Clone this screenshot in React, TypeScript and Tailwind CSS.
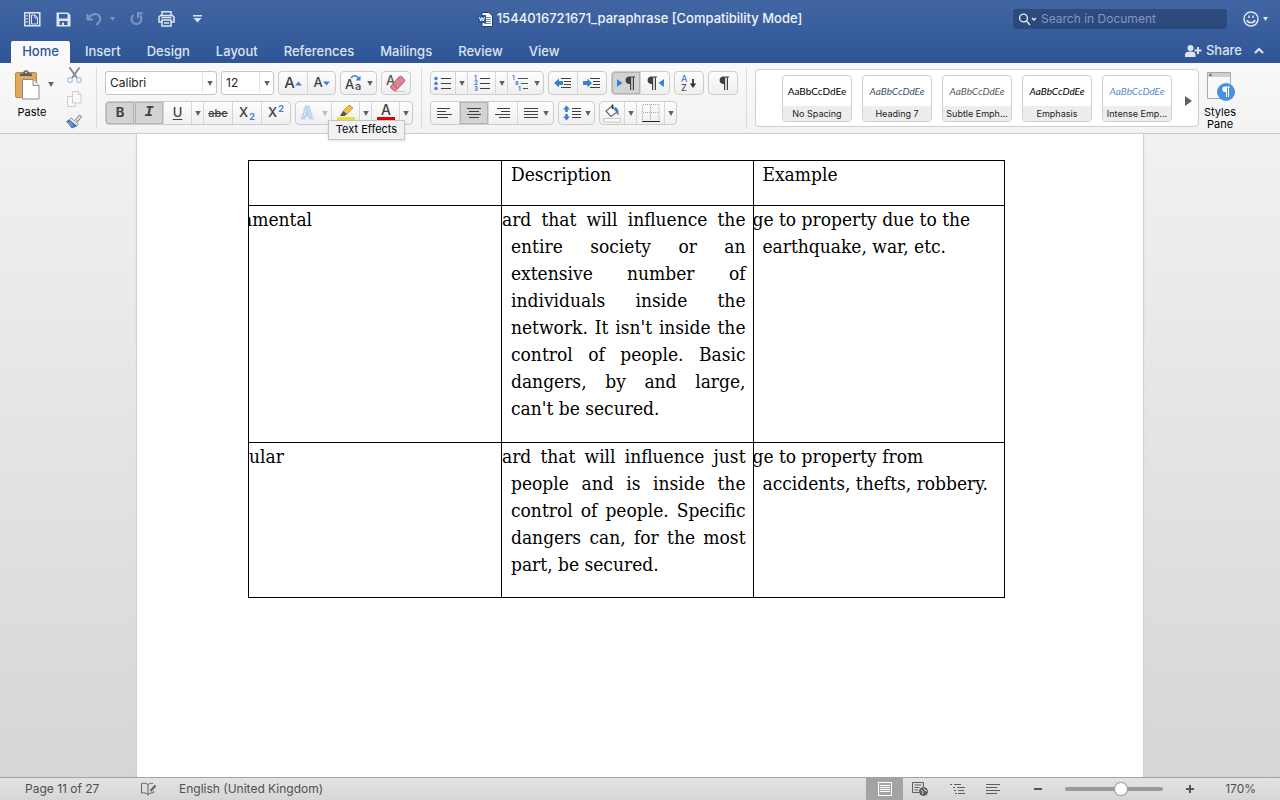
import React from 'react';

interface CellProps {
  label: string;
  className: string;
  pressed?: boolean;
  last?: boolean;
  children: React.ReactNode;
}

function Arrow({ faded }: { faded?: boolean }) {
  return (
    <svg width="6" height="5" viewBox="0 0 6 5" className={faded ? 'shrink-0 opacity-40' : 'shrink-0'}>
      <path d="M0.3 0h5.4L3 5z" fill="#5f5f5f" />
    </svg>
  );
}

function Group({ children }: { children: React.ReactNode }) {
  return (
    <div className="relative flex h-6 rounded-[4px] border border-[#cdcdcd] bg-gradient-to-b from-[#fdfdfd] to-[#efefef]">
      {children}
    </div>
  );
}

function Cell({ label, className, pressed, last, children }: CellProps) {
  return (
    <button
      type="button"
      aria-label={label}
      aria-pressed={pressed}
      className={`flex h-full items-center justify-center text-[#404040] ${last ? '' : 'border-r border-[#d6d6d6]'} ${
        pressed ? 'bg-[#d3d3d3] shadow-[inset_0_0_0_1px_#b3b3b3]' : ''
      } ${className}`}
    >
      {children}
    </button>
  );
}

function Divider() {
  return <div className="mx-2 my-1 w-px bg-[#dcdcdc]" />;
}

interface LinesProps {
  rows: [number, number][];
}

// text lines, each given as start x and end x
function Lines({ rows }: LinesProps) {
  return (
    <svg width="16" height="14" viewBox="0 0 16 14" stroke="#404040" strokeWidth="1" shapeRendering="crispEdges">
      {rows.map(([from, to], i) => (
        <path key={i} d={`M${from} ${i * 3 + 2.5}H${to}`} />
      ))}
    </svg>
  );
}

function IndentIcon({ outward }: { outward?: boolean }) {
  return (
    <svg width="18" height="14" viewBox="0 0 18 14">
      <path d="M7 2.5h10M10 5.5h7M10 8.5h7M7 11.5h10" stroke="#404040" shapeRendering="crispEdges" />
      {outward ? (
        <path d="M0 7 5 2.500v2.500h4v4H5v2.500z" fill="#3c80d4" />
      ) : (
        <path d="M9 7 4.500 2.500v2.500h-4.500v4h4.500v2.500z" fill="#3c80d4" />
      )}
    </svg>
  );
}

function Pilcrow() {
  return (
    <svg width="11" height="14" viewBox="0 0 11 14">
      <path d="M5.5 0.5H11V1.5H10V14H8.8V1.5H7.2V14H6V8H4.8A3.8 3.8 0 0 1 4.8 0.5z" fill="#404040" />
    </svg>
  );
}

function ListIcon({ kind }: { kind: 'bullets' | 'numbers' | 'levels' }) {
  return (
    <svg width="18" height="16" viewBox="0 0 18 16">
      {kind === 'levels' ? (
        <path d="M6 3.5h10M9 8.5h7M11 13.5h5" stroke="#555" shapeRendering="crispEdges" />
      ) : (
        <path d="M7 3.5h10M7 8.5h10M7 13.5h10" stroke="#404040" shapeRendering="crispEdges" />
      )}
      {kind === 'bullets' && (
        <g fill="#3c80d4">
          <circle cx="2" cy="3.5" r="1.7" />
          <circle cx="2" cy="8.5" r="1.7" />
          <circle cx="2" cy="13.5" r="1.7" />
        </g>
      )}
      {kind === 'numbers' && (
        <g fill="#3c80d4" fontFamily="Inter, sans-serif" fontSize="6" fontWeight="700">
          <text x="1" y="5">1</text>
          <text x="1" y="10">2</text>
          <text x="1" y="16">3</text>
        </g>
      )}
      {kind === 'levels' && (
        <g fill="#3c80d4" fontFamily="Inter, sans-serif" fontSize="6" fontWeight="700">
          <text x="0" y="5">1</text>
          <text x="3" y="10">a</text>
          <text x="6" y="16">1</text>
        </g>
      )}
    </svg>
  );
}

const tabs = ['Insert', 'Design', 'Layout', 'References', 'Mailings', 'Review', 'View'];

const styles = [
  { name: 'No Spacing', look: 'text-black' },
  { name: 'Heading 7', look: 'italic text-[#44546a]' },
  { name: 'Subtle Emph...', look: 'italic text-[#5c5c5c]' },
  { name: 'Emphasis', look: 'italic text-black' },
  { name: 'Intense Emp...', look: 'italic text-[#5b8bc9]' },
];

function TitleBar() {
  return (
    <div className="flex h-[38px] items-center px-3">
      <div className="flex flex-1 items-center text-[#dfe6f2]">
        <button type="button" aria-label="Sidebar" className="ml-3 mr-[15px]">
          <svg width="17" height="15" viewBox="0 0 17 15" fill="none" stroke="currentColor">
            <path d="M0.8 0.8h15v13h-15z" strokeWidth="1.5" />
            <path d="M5.5 1v13" strokeWidth="1.2" />
            <path d="M3 3v1.5M3 6v1.5M3 9v1.5" strokeWidth="1.4" />
            <path d="M7.5 3h3.5l2.5 2.5V12h-6zM11 3v3h2.5" />
          </svg>
        </button>
        <button type="button" aria-label="Save" className="mr-[15px]">
          <svg width="15" height="15" viewBox="0 0 15 15">
            <path d="M0.5 0.5h11.5l2.5 2.5v11.5h-14z" fill="currentColor" />
            <path d="M3 2h8.5v4.5H3zM3.5 9h8v4h-8z" fill="#3a5f9f" />
            <path d="M6 10.5h2V13H6z" fill="currentColor" />
          </svg>
        </button>
        <button type="button" aria-label="Undo" className="mr-2 opacity-40">
          <svg width="16" height="14" viewBox="0 0 16 14" fill="none" stroke="currentColor" strokeWidth="2">
            <path d="M1.5 2v5.5H7" />
            <path d="M2 7C5 2 10 0.500 13 3.500c2.500 3 1 7-3 9.500" />
          </svg>
        </button>
        <button type="button" aria-label="Undo history" className="mr-[15px] opacity-40">
          <svg width="5" height="4" viewBox="0 0 5 4"><path d="M0 0h5L2.500 4z" fill="currentColor" /></svg>
        </button>
        <button type="button" aria-label="Redo" className="mr-[15px] opacity-40">
          <svg width="13" height="14" viewBox="0 0 13 14" fill="none" stroke="currentColor" strokeWidth="2">
            <path d="M3.500 3a5 5 0 1 0 6.500 0.500" />
            <path d="M12.500 1.200H8v5" />
          </svg>
        </button>
        <button type="button" aria-label="Print" className="mr-[18px]">
          <svg width="17" height="16" viewBox="0 0 17 16" fill="none" stroke="currentColor" strokeWidth="1.500">
            <path d="M4 4V0.800h9V4" />
            <path d="M4 11H1V6l1.500-1.500h12L16 6v5h-3" />
            <path d="M4 9h9v6H4z" />
            <path d="M3.500 6.500h10M6 12h5" />
          </svg>
        </button>
        <button type="button" aria-label="Customize toolbar">
          <svg width="9" height="8" viewBox="0 0 9 8" fill="currentColor">
            <path d="M0 0h9v1.500H0zM0.500 3h8l-4 4.500z" />
          </svg>
        </button>
      </div>
      <div className="flex items-center gap-1 text-[13px] font-medium text-[#f1f4f9]">
        <svg width="15" height="15" viewBox="0 0 15 15">
          <path d="M4 0.500h7l3.500 3.500v10.500H4z" fill="#fff" stroke="#243f70" />
          <path d="M8 5.500h5M8 7.500h5M8 9.500h5M6 11.500h7" stroke="#6f87b1" />
          <path d="M0 3h8v8H0z" fill="#2b579a" />
          <path d="m1.500 5 1.200 4L4 5.500 5.300 9l1.200-4" fill="none" stroke="#fff" />
        </svg>
        <h1>1544016721671_paraphrase [Compatibility Mode]</h1>
      </div>
      <div className="flex flex-1 items-center justify-end">
        <label className="mr-4 flex h-5 w-[214px] items-center rounded-[3px] bg-[#2c4a7c] pl-[5px]">
          <svg width="20" height="13" viewBox="0 0 20 13" fill="none" stroke="#e6ecf6" strokeWidth="1.400" className="shrink-0">
            <circle cx="5.500" cy="5" r="3.900" />
            <path d="m8.500 8 3.500 4M14 5l2 2 2-2" />
          </svg>
          <input
            type="text"
            aria-label="Search in Document"
            placeholder="Search in Document"
            className="ml-[3px] w-full min-w-0 bg-transparent text-[12px] outline-none placeholder:text-[#8198c1]"
          />
        </label>
        <button type="button" aria-label="Feedback" className="flex items-center gap-1 text-[#dfe6f2]">
          <svg width="16" height="16" viewBox="0 0 16 16" fill="none" stroke="currentColor" strokeWidth="1.500">
            <circle cx="8" cy="8" r="7" />
            <path d="M6 4.500v2.500M10 4.500v2.500M4 9c1 3.500 7 3.500 8 0" />
          </svg>
          <svg width="5" height="4" viewBox="0 0 5 4"><path d="M0 0h5L2.500 4z" fill="currentColor" /></svg>
        </button>
      </div>
    </div>
  );
}

function TabBar() {
  return (
    <div className="flex h-[25px] items-end pl-[11px] pr-4 text-[13px] font-medium text-[#dce4f1]">
      <nav className="flex">
        <button type="button" className="mr-[2px] h-[22px] w-[59px] rounded-t-[2px] bg-[#f9f9f9] text-[#2f5597]">
          Home
        </button>
        {tabs.map((tab) => (
          <button key={tab} type="button" className="h-[22px] px-[13px]">
            {tab}
          </button>
        ))}
      </nav>
      <button type="button" className="ml-auto flex h-[25px] items-center gap-1">
        <svg width="17" height="12" viewBox="0 0 17 12" fill="currentColor">
          <circle cx="5.500" cy="3" r="3" />
          <path d="M0 12V9.500C0 7.500 2 6.500 5.500 6.500S10.500 7.500 10.500 9.500V12zM12 2h2v2.500h2.500v2H14V9h-2V6.500H9.500v-2H12z" />
        </svg>
        Share
      </button>
      <button type="button" aria-label="Collapse ribbon" className="ml-3 flex h-[25px] items-center">
        <svg width="10" height="7" viewBox="0 0 10 7" fill="none" stroke="currentColor" strokeWidth="2.200">
          <path d="m1 6 4-4 4 4" />
        </svg>
      </button>
    </div>
  );
}

function Clipboard() {
  return (
    <div className="flex pl-[14px]">
      <div className="flex w-[42px] flex-col pt-[6px]">
        <button type="button" className="flex flex-col gap-[5px] text-[11px] leading-[14px] text-black">
          <span className="flex items-center gap-[8px]">
            <svg width="26" height="31" viewBox="0 0 26 31">
              <rect x="1.500" y="3.500" width="21" height="25" rx="1.500" fill="#e0a95c" stroke="#c18b42" />
              <path d="M6 7V4.500h3C9 0 15 0 15 4.500h3V7z" fill="#5b5b5b" />
              <circle cx="12" cy="3.500" r="1" fill="#e6e6e6" />
              <path d="M8.500 10.500h10.500l6 6v13.500H8.500z" fill="#fff" stroke="#8b8b8b" />
              <path d="M19 10.500v6h6" fill="#eee" stroke="#8b8b8b" />
            </svg>
            <Arrow />
          </span>
          <span className="w-9 text-center">Paste</span>
        </button>
      </div>
      <div className="ml-[10px] flex w-4 flex-col items-center justify-between pb-1 pt-1">
        <button type="button" aria-label="Cut">
          <svg width="15" height="16" viewBox="0 0 15 16" fill="none">
            <path d="m2.500 0.500 7.500 10.500M12.500 0.500 5 11" stroke="#8d8d8d" strokeWidth="2" />
            <circle cx="3" cy="13" r="2.400" stroke="#a9c5e8" strokeWidth="1.300" />
            <circle cx="12" cy="13" r="2.400" stroke="#a9c5e8" strokeWidth="1.300" />
          </svg>
        </button>
        <button type="button" aria-label="Copy">
          <svg width="15" height="16" viewBox="0 0 15 16" fill="#fafafa" stroke="#cdcdcd">
            <path d="M0.500 5.500h8v10h-8z" />
            <path d="M5.500 0.500H11l3 3v8.500H5.500zM11 0.500v3h3" />
          </svg>
        </button>
        <button type="button" aria-label="Format painter">
          <svg width="16" height="15" viewBox="0 0 16 15">
            <path d="m9.500 5.500 4-4.500 2 1.500-3.500 5z" fill="#e4e4e4" stroke="#777" />
            <path d="m5 4 7.500 6-2 2L3 6z" fill="#ececec" stroke="#777" strokeWidth="0.800" />
            <path d="M3 6 0.500 7.500 6 14l4.500-2z" fill="#3a76b8" stroke="#2c5d98" strokeWidth="0.600" />
            <path d="m2 8 3 4M4 8l3 4" stroke="#8bb6e6" />
          </svg>
        </button>
      </div>
    </div>
  );
}

function FontTools() {
  return (
    <div className="flex flex-col gap-[6px] pt-2">
      <div className="flex">
        <div className="relative mr-1 h-6 w-[112px]">
          <select
            aria-label="Font"
            className="block h-full w-full appearance-none rounded-[3px] border border-[#c6c6c6] bg-white pl-1 text-[12px] text-[#222]"
          >
            <option>Calibri</option>
          </select>
          <span className="pointer-events-none absolute inset-y-[2px] right-px flex w-[14px] items-center justify-center border-l border-[#e3e3e3]">
            <Arrow />
          </span>
        </div>
        <div className="relative mr-1 h-6 w-[53px]">
          <select
            aria-label="Font size"
            className="block h-full w-full appearance-none rounded-[3px] border border-[#c6c6c6] bg-white pl-1 text-[12px] text-[#222]"
          >
            <option>12</option>
          </select>
          <span className="pointer-events-none absolute inset-y-[2px] right-px flex w-[14px] items-center justify-center border-l border-[#e3e3e3]">
            <Arrow />
          </span>
        </div>
        <Group>
          <Cell label="Grow font" className="w-[29px] text-[15px] font-medium">
            A
            <svg width="7" height="5" viewBox="0 0 7 5"><path d="M0 4.500h7L3.500 0.500z" fill="#3c80d4" /></svg>
          </Cell>
          <Cell label="Shrink font" className="w-[27px] text-[13px] font-medium" last>
            A
            <svg width="7" height="5" viewBox="0 0 7 5"><path d="M0 0.500h7L3.500 4.500z" fill="#3c80d4" /></svg>
          </Cell>
        </Group>
        <div className="ml-1">
          <Group>
            <Cell label="Change case" className="w-[35px] gap-1" last>
              <svg width="18" height="18" viewBox="0 0 18 18">
                <g fill="#404040" fontFamily="Inter, sans-serif" fontWeight="500">
                  <text x="0" y="15" fontSize="13">A</text>
                  <text x="10" y="16" fontSize="11">a</text>
                </g>
                <path d="M6 4c2-3 6-3 7 0.500" fill="none" stroke="#3c80d4" strokeWidth="1.600" />
                <path d="M15.500 1.500V6.500h-5z" fill="#3c80d4" />
              </svg>
              <Arrow />
            </Cell>
          </Group>
        </div>
        <div className="ml-1">
          <Group>
            <Cell label="Clear formatting" className="w-7" last>
              <svg width="22" height="20" viewBox="0 0 22 20">
                <text x="1" y="12" fontSize="13" fontFamily="Inter, sans-serif" fontWeight="500" fill="#555">A</text>
                <path d="m6 13 8-9c1-1 2-1 3 0l2 2c1 1 1 2 0 3L11 17.500c-0.500 0.500-1.500 0.500-2 0L6 15c-0.500-0.500-0.500-1.500 0-2z" fill="#dc8593" stroke="#ab5866" />
                <path d="m8 11 4.500 4.500" stroke="#ab5866" />
                <path d="M11 18.500h9" stroke="#c8c8c8" />
              </svg>
            </Cell>
          </Group>
        </div>
      </div>
      <div className="flex gap-1">
        <Group>
          <Cell label="Bold" className="w-[29px] rounded-l-[3px] text-[13px] font-bold" pressed>B</Cell>
          <Cell label="Italic" className="w-[29px] font-['Liberation_Mono',monospace] text-[15px] font-bold italic" pressed>I</Cell>
          <Cell label="Underline" className="w-7 text-[13px] font-medium underline underline-offset-2">U</Cell>
          <Cell label="Underline style" className="w-3"><Arrow /></Cell>
          <Cell label="Strikethrough" className="w-[29px] text-[11px] font-medium line-through">abc</Cell>
          <Cell label="Subscript" className="w-[29px] text-[13px] font-medium">
            X<span className="ml-px mt-2 text-[9px] font-bold text-[#3c80d4]">2</span>
          </Cell>
          <Cell label="Superscript" className="w-7 text-[13px] font-medium" last>
            X<span className="mb-2 ml-px text-[9px] font-bold text-[#3c80d4]">2</span>
          </Cell>
        </Group>
        <Group>
          <Cell label="Text effects" className="w-9 gap-2">
            <svg width="14" height="16" viewBox="0 0 14 16">
              <text x="2" y="13" fontSize="14" fontFamily="Inter, sans-serif" fontWeight="600" fill="#fff" stroke="#cbdff5" strokeWidth="3">A</text>
              <text x="2" y="13" fontSize="14" fontFamily="Inter, sans-serif" fontWeight="600" fill="#fff" stroke="#a4c4e8" strokeWidth="0.800">A</text>
            </svg>
            <Arrow faded />
          </Cell>
          <Cell label="Highlight" className="w-7">
            <svg width="18" height="18" viewBox="0 0 18 18">
              <path d="m6 7 6-6 4 3-6 6z" fill="#f3c04c" stroke="#b88a2a" strokeWidth="0.800" />
              <path d="m6 7 4 3-2.500 2H3z" fill="#555" />
              <path d="M0 13h18v3H0z" fill="#e8e337" />
            </svg>
          </Cell>
          <Cell label="Highlight color" className="w-3"><Arrow /></Cell>
          <Cell label="Font color" className="w-7">
            <svg width="18" height="18" viewBox="0 0 18 18">
              <text x="4" y="11" fontSize="14" fontFamily="Inter, sans-serif" fontWeight="500" fill="#404040">A</text>
              <path d="M0 13h18v3H0z" fill="#e30000" />
            </svg>
          </Cell>
          <Cell label="More font colors" className="w-3" last><Arrow /></Cell>
          <div
            role="tooltip"
            className="absolute left-8 top-[18px] z-10 h-5 w-[77px] whitespace-nowrap border border-[#c4c4c4] bg-[#f1f1f1] text-center text-[11px] leading-4 text-black shadow"
          >
            Text Effects
          </div>
        </Group>
      </div>
    </div>
  );
}

function ParagraphTools() {
  return (
    <div className="flex flex-col gap-[6px] pt-2">
      <div className="flex gap-1">
        <Group>
          <Cell label="Bullets" className="w-[25px]"><ListIcon kind="bullets" /></Cell>
          <Cell label="Bullet styles" className="w-3"><Arrow /></Cell>
          <Cell label="Numbering" className="w-7"><ListIcon kind="numbers" /></Cell>
          <Cell label="Number styles" className="w-3"><Arrow /></Cell>
          <Cell label="Multilevel list" className="w-[35px] gap-1" last>
            <ListIcon kind="levels" />
            <Arrow />
          </Cell>
        </Group>
        <Group>
          <Cell label="Decrease indent" className="w-[29px]"><IndentIcon outward /></Cell>
          <Cell label="Increase indent" className="w-7" last><IndentIcon /></Cell>
        </Group>
        <Group>
          <Cell label="Left to right" className="w-[29px] gap-px rounded-l-[3px]" pressed>
            <svg width="6" height="8" viewBox="0 0 6 8"><path d="M0 0v8l5.500-4z" fill="#3c80d4" /></svg>
            <Pilcrow />
          </Cell>
          <Cell label="Right to left" className="w-7 gap-px" last>
            <Pilcrow />
            <svg width="6" height="8" viewBox="0 0 6 8"><path d="M6 0v8L0.500 4z" fill="#3c80d4" /></svg>
          </Cell>
        </Group>
        <Group>
          <Cell label="Sort" className="w-7" last>
            <svg width="18" height="18" viewBox="0 0 18 18">
              <g fontFamily="Inter, sans-serif" fontSize="9" fontWeight="500">
                <text x="1" y="8" fill="#3c80d4">A</text>
                <text x="1" y="17" fill="#555">Z</text>
              </g>
              <path d="M13 5v6" stroke="#333" strokeWidth="1.800" />
              <path d="M9.800 9.500h6.400L13 14z" fill="#333" />
            </svg>
          </Cell>
        </Group>
        <Group>
          <Cell label="Show formatting marks" className="w-7" last><Pilcrow /></Cell>
        </Group>
      </div>
      <div className="flex gap-1">
        <Group>
          <Cell label="Align left" className="w-[29px]"><Lines rows={[[0, 13], [0, 9], [0, 15], [0, 11]]} /></Cell>
          <Cell label="Center" className="w-[29px]" pressed><Lines rows={[[1, 15], [3, 13], [1, 15], [3, 13]]} /></Cell>
          <Cell label="Align right" className="w-[29px]"><Lines rows={[[2, 15], [6, 15], [0, 15], [4, 15]]} /></Cell>
          <Cell label="Justify" className="w-[35px] gap-1" last>
            <Lines rows={[[1, 15], [1, 15], [1, 15], [1, 15]]} />
            <Arrow />
          </Cell>
        </Group>
        <Group>
          <Cell label="Line spacing" className="w-[35px] gap-1" last>
            <svg width="18" height="16" viewBox="0 0 18 16">
              <path d="M3.500 0.500 7 4.500H4.800V7H2.200V4.500H0zM3.500 15.500 7 11.500H4.800V9H2.200v2.500H0z" fill="#3c80d4" />
              <path d="M9 3.500h9M9 6.500h9M9 9.500h9M9 12.500h9" stroke="#404040" shapeRendering="crispEdges" />
            </svg>
            <Arrow />
          </Cell>
        </Group>
        <Group>
          <Cell label="Shading" className="w-[25px]">
            <svg width="18" height="20" viewBox="0 0 18 20">
              <path d="m3 8 6-5 5 6-6 4.500z" fill="#fdfdfd" stroke="#6b6b6b" strokeWidth="1.200" />
              <path d="M9.500 6V1.500" stroke="#333" strokeWidth="1.600" />
              <path d="M12 4c3 1 4 4 3.500 8-2.500-0.500-2-4-3.500-5z" fill="#3c80d4" />
              <path d="M0.500 15.500h17v3.500H0.500z" fill="#fbfbfb" stroke="#c8c8c8" />
            </svg>
          </Cell>
          <Cell label="Shading color" className="w-3"><Arrow /></Cell>
          <Cell label="Borders" className="w-7">
            <svg width="18" height="18" viewBox="0 0 18 18">
              <path d="M0.500 16V0.500H17V16M8.500 1v15M1 8.500h16" fill="none" stroke="#a5a5a5" strokeDasharray="1 1" />
              <path d="M0 17.500h18" stroke="#222" />
            </svg>
          </Cell>
          <Cell label="Border styles" className="w-[11px]" last><Arrow /></Cell>
        </Group>
      </div>
    </div>
  );
}

function StylesGallery() {
  return (
    <div className="mt-[6px] flex h-[58px] w-[444px] items-start gap-[10px] rounded-[4px] border border-[#cfcfcf] bg-white pl-[26px] pt-[5px]">
      {styles.map((style) => (
        <button
          key={style.name}
          type="button"
          className="flex h-[47px] w-[70px] shrink-0 flex-col overflow-hidden rounded-[4px] border border-[#cfcfcf]"
        >
          <span className={`flex w-full flex-1 items-center justify-center font-['Lato',sans-serif] text-[10px] leading-[14px] ${style.look}`}>
            AaBbCcDdEe
          </span>
          <span className="w-full whitespace-nowrap bg-[#ededed] text-center text-[9px] leading-[15px] text-[#222]">
            {style.name}
          </span>
        </button>
      ))}
      <button type="button" aria-label="More styles" className="ml-[3px] self-center">
        <svg width="7" height="10" viewBox="0 0 7 10"><path d="M0 0v10l7-5z" fill="#5f5f5f" /></svg>
      </button>
    </div>
  );
}

function Ribbon() {
  return (
    <div className="flex h-[71px] shrink-0 border-b border-[#c6c6c6] bg-gradient-to-b from-[#f9f9f9] to-[#f3f3f3]">
      <Clipboard />
      <div className="ml-[6px] flex">
        <Divider />
        <FontTools />
        <Divider />
        <ParagraphTools />
        <Divider />
        <StylesGallery />
        <button type="button" className="ml-[5px] flex flex-col items-center pt-2 text-[11px] leading-3 text-black">
          <svg width="30" height="31" viewBox="0 0 30 31" className="mb-1">
            <path d="M2.500 1.500h23v26h-23z" fill="#fafafa" stroke="#a8a8a8" />
            <path d="M3 2h22v4H3z" fill="#cfcfcf" />
            <circle cx="5.500" cy="4" r="1.200" fill="#666" />
            <circle cx="21" cy="21" r="9" fill="#4a90e2" />
            <path d="M20 15.500h5v1h-1V26h-1v-9.500h-1V26h-1v-5h-1a2.700 2.700 0 0 1 0-5.500z" fill="#fff" />
          </svg>
          <span>Styles</span>
          <span>Pane</span>
        </button>
      </div>
    </div>
  );
}

function HazardTable() {
  return (
    <table className="w-[757px] table-fixed border-collapse font-['DejaVu_Serif_Condensed','DejaVu_Serif',serif] text-[19px] leading-[27px] text-black [&_td]:border [&_td]:border-black [&_td]:p-0 [&_td]:align-top [&_th]:border [&_th]:border-black [&_th]:p-0 [&_th]:align-top">
      <thead>
        <tr className="h-[45px]">
          <th className="w-[253px]" />
          <th className="text-left font-normal"><div className="pl-[9px]">Description</div></th>
          <th className="text-left font-normal"><div className="pl-[9px]">Example</div></th>
        </tr>
      </thead>
      <tbody>
        <tr className="h-[237px]">
          <td><div className="overflow-hidden indent-[-7px]">amental</div></td>
          <td>
            <p className="overflow-hidden pl-[9px] pr-[7px] text-justify indent-[-9px]">
              ard that will influence the entire society or an extensive number of individuals inside the
              network. It isn't inside the control of people. Basic dangers, by and large, can't be secured.
            </p>
          </td>
          <td>
            <p className="overflow-hidden pl-[9px] indent-[-10px]">
              ge to property due to the earthquake, war, etc.
            </p>
          </td>
        </tr>
        <tr className="h-[155px]">
          <td><div className="overflow-hidden">ular</div></td>
          <td>
            <p className="overflow-hidden pl-[9px] pr-[7px] text-justify indent-[-9px]">
              ard that will influence just people and is inside the control of people. Specific dangers can,
              for the most part, be secured.
            </p>
          </td>
          <td>
            <p className="overflow-hidden pl-[9px] indent-[-10px]">
              ge to property from accidents, thefts, robbery.
            </p>
          </td>
        </tr>
      </tbody>
    </table>
  );
}

function StatusBar() {
  return (
    <footer className="flex h-[23px] shrink-0 items-center border-t border-[#a3a3a3] bg-gradient-to-b from-[#e3e3e3] to-[#d6d6d6] pl-[25px] pr-6 text-[12px] text-[#505050]">
      <span className="w-[116px]">Page 11 of 27</span>
      <button type="button" aria-label="Proofing" className="mr-[22px]">
        <svg width="16" height="14" viewBox="0 0 16 14" fill="none" stroke="#666">
          <path d="M7 2.500C5 1 3 1 0.500 1.500v9.500c2.500-0.500 4.500 0 6.500 1.500 2-1.500 4-2 5.500-1.500V9M7 2.500v11M7 2.500C8.500 1.500 10 1 12 1.500" />
          <path d="m9.500 9 5-5.500" strokeWidth="2.200" />
        </svg>
      </button>
      <span>English (United Kingdom)</span>
      <div className="ml-auto flex h-full items-center">
        <button type="button" aria-label="Print layout" className="flex h-full w-[37px] items-center justify-center bg-[#a3a3a3]">
          <svg width="14" height="14" viewBox="0 0 14 14" fill="none" stroke="#fff" shapeRendering="crispEdges">
            <path d="M0.500 0.500h13v12.500H0.500zM2 3.500h10M2 5.500h10M2 7.500h10M2 9.500h10" />
          </svg>
        </button>
        <button type="button" aria-label="Web layout" className="ml-[9px]">
          <svg width="17" height="15" viewBox="0 0 17 15" fill="none" stroke="#5e5e5e">
            <path d="M7 10.500H0.500V0.500h11V5M2.500 3h7M2.500 5.500h5M2.500 8h4" />
            <circle cx="11.500" cy="9.500" r="4" fill="#5e5e5e" />
            <path d="m9 8 2 1.500-0.500 2.500M12 6.500l1 2 2 0.500" stroke="#ddd" />
          </svg>
        </button>
        <button type="button" aria-label="Outline" className="ml-[21px]">
          <svg width="16" height="12" viewBox="0 0 16 12" stroke="#5e5e5e" shapeRendering="crispEdges">
            <path d="M0 1.500h2M4 1.500h7M3 4.500h2M7 4.500h8M4 7.500h2M8 7.500h6M5 10.500h2M8 10.500h7" />
          </svg>
        </button>
        <button type="button" aria-label="Draft" className="ml-5">
          <svg width="14" height="12" viewBox="0 0 14 12" stroke="#5e5e5e" shapeRendering="crispEdges">
            <path d="M0 1.500h14M0 4.500h11M0 7.500h14M0 10.500h11" />
          </svg>
        </button>
        <button type="button" aria-label="Zoom out" className="ml-[34px]">
          <svg width="8" height="8" viewBox="0 0 8 8"><path d="M0 3h8v2H0z" fill="#555" /></svg>
        </button>
        <input
          type="range"
          aria-label="Zoom"
          min="0"
          max="100"
          defaultValue="58"
          className="ml-[23px] h-1 w-[98px] appearance-none rounded-full bg-[#9b9b9b] [&::-webkit-slider-thumb]:size-3 [&::-webkit-slider-thumb]:appearance-none [&::-webkit-slider-thumb]:rounded-full [&::-webkit-slider-thumb]:bg-white [&::-webkit-slider-thumb]:shadow-[0_0_1px_1px_#9b9b9b]"
        />
        <button type="button" aria-label="Zoom in" className="ml-[23px]">
          <svg width="8" height="8" viewBox="0 0 8 8"><path d="M0 3h3V0h2v3h3v2H5v3H3V5H0z" fill="#555" /></svg>
        </button>
        <span className="w-[62px] text-right">170%</span>
      </div>
    </footer>
  );
}

export default function App() {
  return (
    <div className="flex h-screen flex-col overflow-hidden font-['Inter',sans-serif]">
      <header className="shrink-0 bg-gradient-to-b from-[#4266a3] to-[#2f5597]">
        <TitleBar />
        <TabBar />
      </header>
      <Ribbon />
      <main className="min-h-0 flex-1 bg-gradient-to-b from-[#f1f1f1] to-[#d6d6d6] px-[137px]">
        <div className="h-full bg-white pl-[111px] pt-[26px] shadow-[0_0_1px_1px_#d0d0d0]">
          <HazardTable />
        </div>
      </main>
      <StatusBar />
    </div>
  );
}
